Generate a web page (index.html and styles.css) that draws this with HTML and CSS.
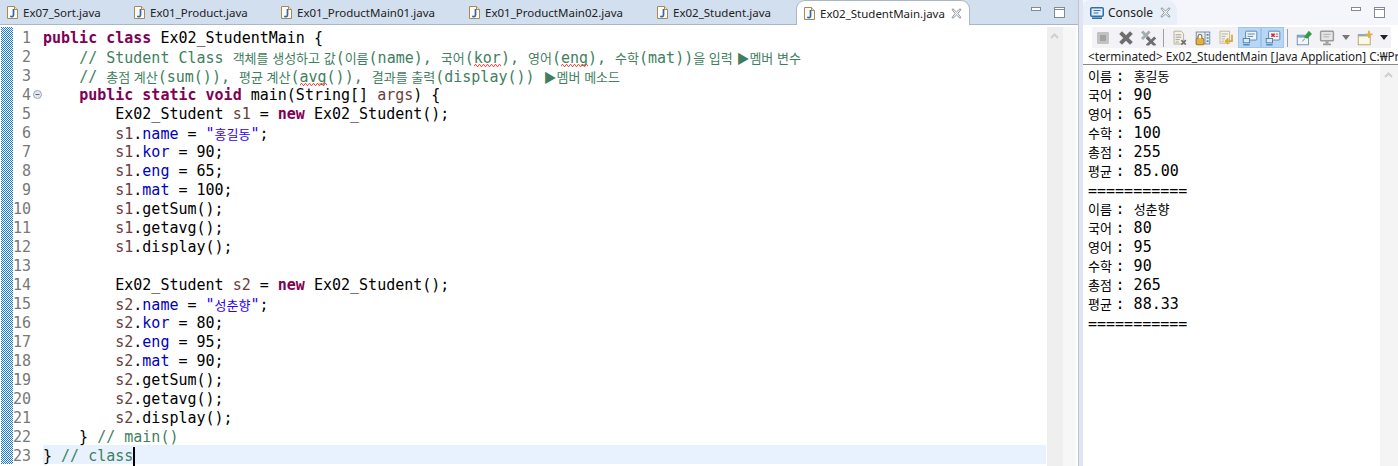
FILE: index.html
```html
<!DOCTYPE html>
<html lang="ko">
<head>
<meta charset="utf-8">
<title>Ex02_StudentMain.java</title>
<link rel="stylesheet" href="styles.css">
</head>
<body>
<svg class="defs" width="0" height="0" aria-hidden="true">
  <defs>
    <pattern id="dither" width="2" height="2" patternUnits="userSpaceOnUse">
      <rect width="2" height="2" fill="#fff"/>
      <rect width="1" height="1" fill="#1a78dc"/>
      <rect x="1" y="1" width="1" height="1" fill="#1a78dc"/>
    </pattern>
  </defs>
  <symbol id="jfile" viewBox="0 0 11 13">
    <path d="M.5.500h7l3 3v9h-10z" fill="#fdfbf4" stroke="#a58a55"/>
    <path d="M7.500.500v3h3" fill="#eee3c8" stroke="#a58a55"/>
    <path d="M6.500 3v6c0 1.500-1.500 2-3.300 1.200" fill="none" stroke="#2f68ad" stroke-width="1.700"/>
  </symbol>
  <symbol id="closex" viewBox="0 0 11 11">
    <path d="M1 1.500 2 .8 5.500 4 9 .8l1 .7L6.800 5.500 10 9.500l-1 .7L5.500 7 2 10.200l-1-.7 3.200-4z" fill="#fff" stroke="#7b8a8e" stroke-width=".9"/>
  </symbol>
  <symbol id="minimize" viewBox="0 0 10 11">
    <rect x=".5" y=".5" width="9" height="3" fill="#fff" stroke="#7f8a96"/>
  </symbol>
  <symbol id="maximize" viewBox="0 0 11 11">
    <rect x=".5" y=".5" width="10" height="10" fill="#fff" stroke="#7f8a96"/>
    <path d="M1 2.500h9" stroke="#7f8a96"/>
  </symbol>
</svg>

<main class="workbench">
  <section class="editor-pane">
    <nav class="tabs">
      <div class="tab tab-a"><svg class="jicon"><use href="#jfile"/></svg><span>Ex07_Sort.java</span></div>
      <div class="tab tab-b"><svg class="jicon"><use href="#jfile"/></svg><span>Ex01_Product.java</span></div>
      <div class="tab tab-c"><svg class="jicon"><use href="#jfile"/></svg><span>Ex01_ProductMain01.java</span></div>
      <div class="tab tab-d"><svg class="jicon"><use href="#jfile"/></svg><span>Ex01_ProductMain02.java</span></div>
      <div class="tab tab-e"><svg class="jicon"><use href="#jfile"/></svg><span>Ex02_Student.java</span></div>
      <div class="tab tab-active"><svg class="jicon"><use href="#jfile"/></svg><span>Ex02_StudentMain.java</span><svg class="closex"><use href="#closex"/></svg></div>
      <div class="win-btns"><svg class="winmin"><use href="#minimize"/></svg><svg class="winmax"><use href="#maximize"/></svg></div>
    </nav>
    <div class="editor-body">
      <svg class="stripe" aria-hidden="true"><rect width="12" height="437" fill="url(#dither)"/></svg>
      <div class="numbers">
        <div>1</div><div>2</div><div>3</div><div class="fold-row">4<svg class="fold" viewBox="0 0 9 9"><circle cx="4.500" cy="4.500" r="4" fill="#e4e8ee" stroke="#9aa5b5"/><path d="M2.500 4.500h4" stroke="#56657d"/></svg></div><div>5</div><div>6</div><div>7</div><div>8</div><div>9</div><div>10</div><div>11</div><div>12</div><div>13</div><div>14</div><div>15</div><div>16</div><div>17</div><div>18</div><div>19</div><div>20</div><div>21</div><div>22</div><div>23</div>
      </div>
      <pre class="code"><div class="ln"><b>public class</b> Ex02_StudentMain {</div><div class="ln">    <i>// Student Class <span class="ko">객체를 생성하고 값</span>(<span class="ko">이름</span>(name), <span class="ko">국어</span>(<u>kor</u>), <span class="ko">영어</span>(<u>eng</u>), <span class="ko">수학</span>(mat))<span class="ko">을 입력 ▶멤버 변수</span></i></div><div class="ln">    <i>// <span class="ko">총점 계산</span>(sum()), <span class="ko">평균 계산</span>(<u>avg</u>()), <span class="ko">결과를 출력</span>(display()) <span class="ko">▶멤버 메소드</span></i></div><div class="ln">    <b>public static void</b> main(String[] <em>args</em>) {</div><div class="ln">        Ex02_Student <em>s1</em> = <b>new</b> Ex02_Student();</div><div class="ln">        <em>s1</em>.<a>name</a> = <s>"<span class="ko">홍길동</span>"</s>;</div><div class="ln">        <em>s1</em>.<a>kor</a> = 90;</div><div class="ln">        <em>s1</em>.<a>eng</a> = 65;</div><div class="ln">        <em>s1</em>.<a>mat</a> = 100;</div><div class="ln">        <em>s1</em>.getSum();</div><div class="ln">        <em>s1</em>.getavg();</div><div class="ln">        <em>s1</em>.display();</div><div class="ln"> </div><div class="ln">        Ex02_Student <em>s2</em> = <b>new</b> Ex02_Student();</div><div class="ln">        <em>s2</em>.<a>name</a> = <s>"<span class="ko">성춘향</span>"</s>;</div><div class="ln">        <em>s2</em>.<a>kor</a> = 80;</div><div class="ln">        <em>s2</em>.<a>eng</a> = 95;</div><div class="ln">        <em>s2</em>.<a>mat</a> = 90;</div><div class="ln">        <em>s2</em>.getSum();</div><div class="ln">        <em>s2</em>.getavg();</div><div class="ln">        <em>s2</em>.display();</div><div class="ln">    } <i>// main()</i></div><div class="ln current">} <i>// class</i><span class="caret"></span></div></pre>
      <div class="scroll scroll-editor"><svg class="scroll-up" viewBox="0 0 9 6"><path d="M1 5l3.500-3.500L8 5" fill="none" stroke="#cfcfcf" stroke-width="2"/></svg></div>
      <div class="scroll-side"></div>
    </div>
  </section>
  <div class="sash"></div>
  <section class="console-pane">
    <header class="console-tabs">
      <div class="console-tab">
        <svg class="console-icon" viewBox="0 0 14 12"><rect x=".75" y=".75" width="12.500" height="8.500" rx="1" fill="#e8f1fb" stroke="#2f6ea8" stroke-width="1.500"/><path d="M3.500 3.500h7M3.500 6h5" stroke="#2f6ea8"/><path d="M2 11.200h10" stroke="#2f6ea8" stroke-width="1.600"/></svg>
        <span>Console</span>
        <svg class="closex"><use href="#closex"/></svg>
      </div>
      <div class="win-btns console-win"><svg class="winmin"><use href="#minimize"/></svg><svg class="winmax"><use href="#maximize"/></svg></div>
    </header>
    <div class="toolbar">
      <svg class="tool" viewBox="0 0 20 20"><rect x="3.500" y="3.500" width="13" height="13" fill="#c8c8c8" stroke="#a8a8a8"/><rect x="6" y="6" width="8" height="8" fill="#a3a3a3"/></svg>
      <svg class="tool" viewBox="0 0 20 20"><path d="M1.500 5 5 1.500l5 5 5-5L18.500 5l-5 5 5 5-3.500 3.500-5-5-5 5L1.500 15l5-5z" fill="#6e6e6e"/></svg>
      <svg class="tool" viewBox="0 0 20 20"><path d="M0 3l2.500-2.500L6 4l3.500-3.500L12 3 8.500 6.500 12 10l-2.500 2.500L6 9l-3.500 3.500L0 10l3.500-3.500z" fill="#a5acb0"/><path d="M6 10.500l2.500-2.500 4 4 4-4 2.500 2.500-4 4 4 4-1 1h-3l-2.500-2.500-2.500 2.500h-3l-1-1 4-4z" fill="#6e6e6e"/></svg>
      <span class="tool-sep"></span>
      <svg class="tool" viewBox="0 0 20 20"><path d="M2.500 1.500h9l3 3v13h-12z" fill="#f6f1df" stroke="#a9a185"/><path d="M4.500 6h7M4.500 9h7M4.500 12h5M4.500 15h4" stroke="#7f8ca8"/><path d="M11 13.500l1.500-1.500 2 2 2-2 1.500 1.500-2 2 2 2-1.500 1.500-2-2-2 2-1.500-1.500 2-2z" fill="#707070"/></svg>
      <svg class="tool" viewBox="0 0 20 20"><rect x="1.500" y="2.500" width="17" height="15" fill="#e6edf5" stroke="#5d7b9a"/><path d="M12.500 2.500v15" stroke="#5d7b9a"/><path d="M14.500 6h2.500M14.500 10h2.500M14.500 14h2.500" stroke="#24578a" stroke-width="1.500"/><rect x="1.500" y="10.500" width="9.500" height="8" rx="1" fill="#e4b23c" stroke="#95691a"/><path d="M3.800 10.500V8a2.400 2.400 0 0 1 4.800 0v2.500" fill="#fff" stroke="#95691a" stroke-width="1.400"/></svg>
      <svg class="tool" viewBox="0 0 20 20"><path d="M2.500 1.500h12v15h-12z" fill="#f8f3de" stroke="#b5aa85"/><path d="M4.500 5h8M4.500 8h5M4.500 11h4M4.500 14h3" stroke="#98a2b8"/><path d="M17.500 6v8h-7M13 10.500l-3.500 3.500 3.500 3.500" fill="none" stroke="#d9a93d" stroke-width="2.200"/></svg>
      <div class="tool-group">
        <span class="tool-on"><svg class="tool" viewBox="0 0 20 20"><rect x="4.500" y="1.500" width="14" height="11" rx="1" fill="#f0f6fc" stroke="#3f74a6"/><path d="M7 5h9M7 8h7" stroke="#3f74a6"/><rect x="1.500" y="10.500" width="8" height="5.500" fill="#dce8f3" stroke="#3f74a6"/><path d="M1.500 18.500h8" stroke="#3f74a6" stroke-width="1.500"/></svg></span>
        <span class="tool-on"><svg class="tool" viewBox="0 0 20 20"><rect x="4.500" y="1.500" width="14" height="11" rx="1" fill="#f0f6fc" stroke="#3f74a6"/><path d="M8 4.500l4 4M12 4.500l-4 4" stroke="#cf2b2b" stroke-width="1.900"/><path d="M13.500 5h3M13.500 8h3" stroke="#cf2b2b"/><rect x="1.500" y="10.500" width="8" height="5.500" fill="#dce8f3" stroke="#3f74a6"/><path d="M1.500 18.500h8" stroke="#3f74a6" stroke-width="1.500"/></svg></span>
      </div>
      <span class="tool-sep"></span>
      <svg class="tool" viewBox="0 0 20 20"><rect x="1.500" y="6.500" width="14" height="12" fill="#f2f6fa" stroke="#5f7f9e"/><rect x="1.500" y="6.500" width="14" height="3" fill="#7fa3c5"/><path d="M10 9l6-8 4 4-6 6z" fill="#2e9c45"/><path d="M8 14l3-3" stroke="#555"/></svg>
      <svg class="tool" viewBox="0 0 20 20"><rect x="2" y="1.500" width="16" height="12" rx="1" fill="#e4e4e4" stroke="#9b9b9b" stroke-width="1.800"/><path d="M5.500 5.500h9M5.500 8.500h7" stroke="#a5a5a5"/><path d="M8 15.500h4M5 18h10" stroke="#9b9b9b" stroke-width="2"/></svg>
      <span class="caret-down muted"></span>
      <svg class="tool" viewBox="0 0 20 20"><rect x="1.500" y="5.500" width="15" height="13" fill="#fdf8e3" stroke="#a8975c"/><rect x="1.500" y="5.500" width="15" height="2.500" fill="#8aaacb"/><path d="M15 1v9M10.500 5.500h9" stroke="#e2b23d" stroke-width="2.400"/></svg>
      <span class="caret-down"></span>
    </div>
    <div class="process">&lt;terminated&gt; Ex02_StudentMain [Java Application] C:₩Pr</div>
    <div class="console-body">
      <div class="output">
        <div class="out"><span class="ko">이름 </span>: <span class="ko">홍길동</span></div>
        <div class="out"><span class="ko">국어 </span>: 90</div>
        <div class="out"><span class="ko">영어 </span>: 65</div>
        <div class="out"><span class="ko">수학 </span>: 100</div>
        <div class="out"><span class="ko">총점 </span>: 255</div>
        <div class="out"><span class="ko">평균 </span>: 85.00</div>
        <div class="out rule">===========</div>
        <div class="out"><span class="ko">이름 </span>: <span class="ko">성춘향</span></div>
        <div class="out"><span class="ko">국어 </span>: 80</div>
        <div class="out"><span class="ko">영어 </span>: 95</div>
        <div class="out"><span class="ko">수학 </span>: 90</div>
        <div class="out"><span class="ko">총점 </span>: 265</div>
        <div class="out"><span class="ko">평균 </span>: 88.33</div>
        <div class="out rule">===========</div>
      </div>
      <div class="scroll scroll-console"><svg class="scroll-up" viewBox="0 0 9 6"><path d="M1 5l3.500-3.500L8 5" fill="none" stroke="#cfcfcf" stroke-width="2"/></svg></div>
    </div>
  </section>
</main>
</body>
</html>
```
FILE: styles.css
```css
* { box-sizing: border-box; }
html, body { margin: 0; height: 466px; overflow: hidden; background: #fff; }
.defs { position: absolute; }
.workbench { display: flex; width: 1398px; height: 466px; font-family: "Noto Sans", sans-serif; }

.editor-pane { width: 1078px; display: flex; flex-direction: column; }
.tabs { height: 25px; display: flex; padding-left: 7px; background: #d2dfef; border-bottom: 1px solid #a9b7c6; font-size: 11.5px; color: #222; }
.tab { display: flex; align-items: center; gap: 5px; height: 25px; flex: none; }
.tab-a { width: 127px; }
.tab-b { width: 147px; }
.tab-c { width: 188px; }
.tab-d { width: 188px; }
.tab-e { width: 139px; }
.tab-active { width: 174px; background: #fff; border: 1px solid #a9b7c6; border-bottom: 0; border-radius: 9px 9px 0 0; padding-left: 7px; }
.jicon { width: 11px; height: 13px; flex: none; }
.closex { width: 11px; height: 11px; flex: none; }
.tab-active .closex { margin-left: auto; margin-right: 7px; }
.win-btns { display: flex; gap: 13px; height: 25px; padding-top: 7px; margin-left: 61px; }
.winmin { width: 10px; height: 11px; }
.winmax { width: 11px; height: 11px; }

.editor-body { flex: 1; display: flex; min-height: 0; }
.stripe { width: 12px; height: 437px; margin: 2px 0 0 1px; flex: none; }
.numbers { width: 30px; flex: none; padding-top: 4px; font: 15px/19px "DejaVu Sans Mono", monospace; color: #787878; }
.numbers > div { height: 19px; width: 18px; text-align: right; position: relative; }
.fold { position: absolute; left: 20px; top: 4px; width: 9px; height: 9px; }
.code { flex: none; width: 1003px; margin: 0; padding-top: 2px; font: 15px/19px "DejaVu Sans Mono", monospace; color: #000; }
.ln { height: 19px; line-height: 23px; white-space: pre; }
.current { background: #e8f2fe; }
.code b { color: #7f0055; font-weight: bold; }
.code i { color: #3f7f5f; font-style: normal; }
.code em { color: #6a3e3e; font-style: normal; }
.code a { color: #0000c0; }
.code s { color: #2a00ff; text-decoration: none; }
.code u { position: relative; text-decoration: none; }
.code u::after { content: ""; position: absolute; left: 0; right: 0; top: 15px; height: 3px; background: url("data:image/svg+xml,%3Csvg xmlns='http://www.w3.org/2000/svg' width='4' height='3'%3E%3Cpath d='M0 2.500 1 .5h1l1 2h1' fill='none' stroke='%23f0524f'/%3E%3C/svg%3E") repeat-x; }
.ko { font-family: "Noto Sans CJK KR", sans-serif; font-size: 13px; }
.caret { display: inline-block; width: 2px; height: 19px; background: #000; vertical-align: -5px; }
.scroll { background: #efefef; position: relative; margin-top: 2px; }
.scroll-editor { width: 16px; margin-left: 1px; }
.scroll-side { width: 13px; margin-top: 2px; background: #f7f7f7; }
.scroll-up { position: absolute; left: 3px; top: 6px; width: 9px; height: 6px; }

.sash { width: 5px; flex: none; border-left: 1px solid #c3c3c3; background: #dfe4f7; }
.console-pane { flex: 1; display: flex; flex-direction: column; min-width: 0; }
.console-tabs { height: 25px; display: flex; background: #f5f6fb; }
.console-tab { display: flex; align-items: center; width: 94px; padding-left: 7px; background: #e9eff8; border-radius: 7px 11px 0 0; font-size: 12px; color: #222; gap: 4px; }
.console-tab .closex { margin-left: 3px; }
.console-icon { width: 14px; height: 12px; flex: none; }
.console-win { margin-left: 174px; }
.toolbar { height: 21px; margin: 2px 0 0 9px; width: 299px; padding-left: 3px; display: flex; align-items: center; gap: 7px; background: #f3f3f7; }
.tool { width: 16px; height: 16px; flex: none; }
.tool-sep { width: 1px; height: 18px; margin: 0 1px 0 -1px; background: #a0a0a0; flex: none; }
.tool-group { display: flex; height: 21px; margin: 0 -3px; flex: none; }
.tool-on { width: 23px; display: flex; align-items: center; justify-content: center; background: #b9d7f5; border: 1px solid #9fc7ee; }
.caret-down { width: 0; height: 0; border: 4px solid transparent; border-top: 5px solid #222; border-bottom: 0; flex: none; }
.caret-down.muted { border-top-color: #777; }
.process { height: 17px; font: 11.7px/17px "Noto Sans", sans-serif; color: #222; padding-left: 5px; white-space: nowrap; overflow: hidden; border-bottom: 1px solid #888; }
.console-body { flex: 1; display: flex; min-height: 0; }
.output { flex: 1; padding: 1px 0 0 5px; font: 15px/19px "DejaVu Sans Mono", monospace; color: #000; }
.out { height: 19px; white-space: pre; }
.rule { line-height: 22px; }
.scroll-console { width: 18px; margin-top: 0; background: #f4f4f4; }
.scroll-console .scroll-up { left: 4px; top: 7px; }
```
